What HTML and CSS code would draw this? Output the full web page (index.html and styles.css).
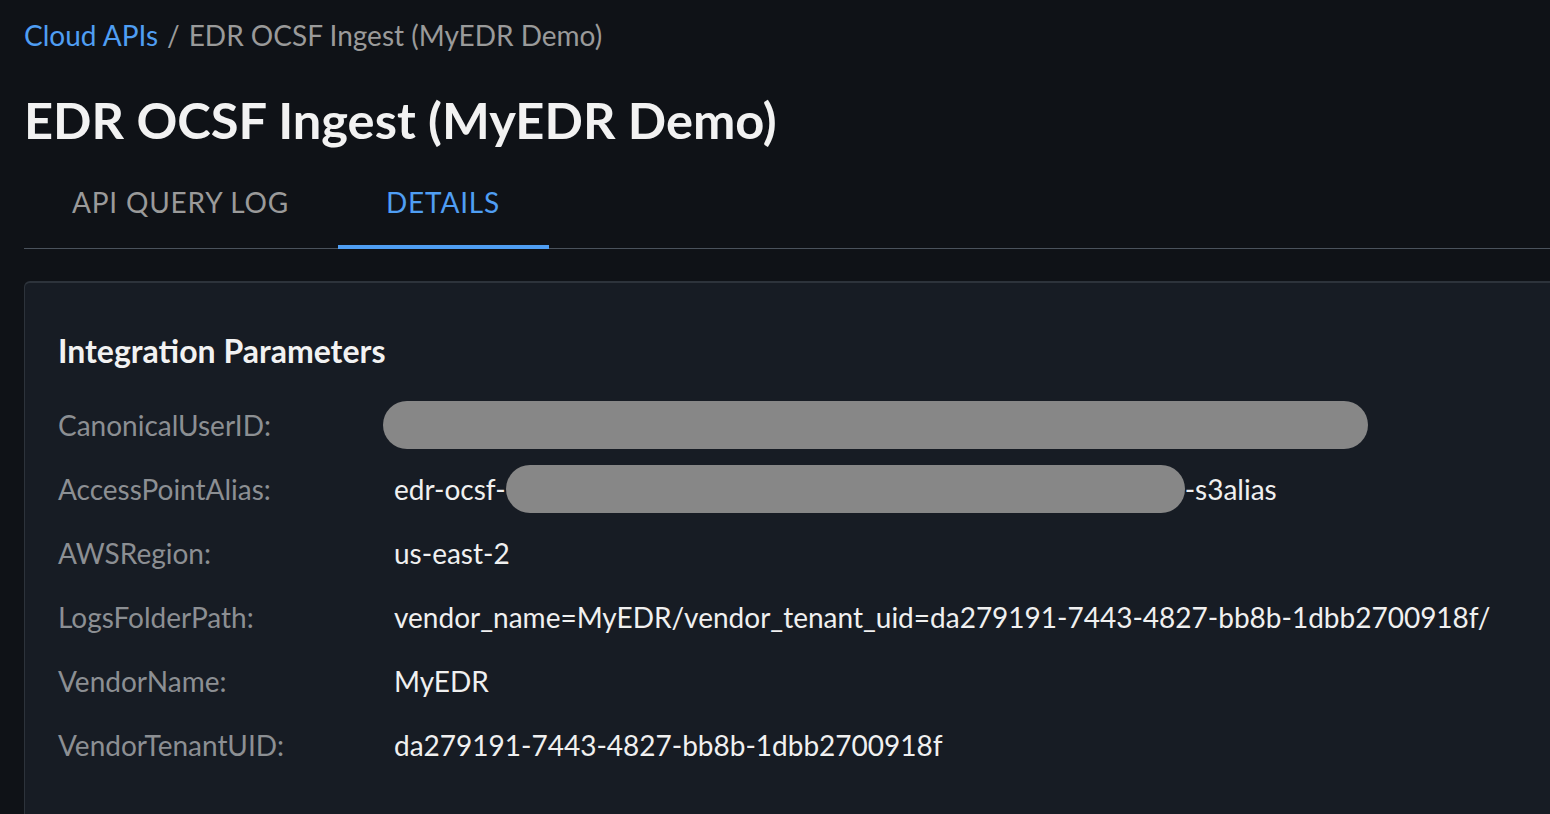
FILE: index.html
```html
<!DOCTYPE html>
<html lang="en">
<head>
<meta charset="utf-8">
<title>EDR OCSF Ingest (MyEDR Demo)</title>
<link rel="stylesheet" href="styles.css">
</head>
<body>
<div class="page">
  <nav class="breadcrumb">
    <a class="crumb-link" href="#">Cloud APIs</a>
    <span class="crumb-sep">/</span>
    <span class="crumb-current">EDR OCSF Ingest (MyEDR Demo)</span>
  </nav>
  <h1 class="title">EDR OCSF Ingest (MyEDR Demo)</h1>
  <div class="tabs">
    <div class="tab">API QUERY LOG</div>
    <div class="tab tab-active">DETAILS</div>
  </div>
  <section class="card">
    <h2 class="card-title">Integration Parameters</h2>
    <dl class="params">
      <div class="row">
        <dt class="label">CanonicalUserID:</dt>
        <dd class="value"><span class="redact redact-full"></span></dd>
      </div>
      <div class="row">
        <dt class="label">AccessPointAlias:</dt>
        <dd class="value">edr-ocsf-<span class="redact redact-mid"></span>-s3alias</dd>
      </div>
      <div class="row">
        <dt class="label">AWSRegion:</dt>
        <dd class="value">us-east-2</dd>
      </div>
      <div class="row">
        <dt class="label">LogsFolderPath:</dt>
        <dd class="value">vendor_name=MyEDR/vendor_tenant_uid=da279191-7443-4827-bb8b-1dbb2700918f/</dd>
      </div>
      <div class="row">
        <dt class="label">VendorName:</dt>
        <dd class="value">MyEDR</dd>
      </div>
      <div class="row">
        <dt class="label">VendorTenantUID:</dt>
        <dd class="value">da279191-7443-4827-bb8b-1dbb2700918f</dd>
      </div>
    </dl>
  </section>
</div>
</body>
</html>
```

FILE: styles.css
```css
html, body {
  margin: 0;
  padding: 0;
  background: #0f1217;
  height: 100%;
  overflow: hidden;
}

body {
  font-family: Lato, "Noto Sans", sans-serif;
  color: #f0f0f0;
}

.page {
  padding: 18px 0 0 24px;
}

.breadcrumb {
  font-size: 28px;
  line-height: 34px;
  display: flex;
  gap: 9px;
  color: #9a9a9a;
}

.crumb-link {
  color: #4f9ef3;
  text-decoration: none;
}

.title {
  margin: 38px 0 0 0;
  font-size: 50.6px;
  line-height: 60px;
  font-weight: 700;
  color: #f2f2f2;
}

.tabs {
  margin-top: 12px;
  display: flex;
  border-bottom: 1px solid #4a525c;
}

.tab {
  font-size: 28px;
  line-height: 34px;
  letter-spacing: 0.8px;
  color: #9a9a9a;
  padding: 23px 49px 26px 48px;
  border-bottom: 4px solid transparent;
  margin-bottom: -1px;
}

.tab-active {
  color: #4f9ef3;
  border-bottom-color: #4f9ef3;
}

.card {
  margin-top: 32px;
  background: #171c24;
  border-top: 2px solid #2d333b;
  border-left: 1px solid #2d333b;
  border-top-left-radius: 6px;
  padding: 50px 0 40px 33px;
  min-height: 600px;
}

.card-title {
  margin: 0 0 24px 0;
  font-size: 32px;
  line-height: 36px;
  font-weight: 700;
  color: #f2f2f2;
}

.params {
  margin: 0;
}

.row {
  display: flex;
  align-items: center;
  height: 64px;
}

.label {
  width: 336px;
  flex: none;
  font-size: 28px;
  color: #8c8f93;
}

.value {
  margin: 0;
  font-size: 28px;
  color: #f0f0f0;
  display: flex;
  align-items: center;
  white-space: nowrap;
}

.redact {
  display: inline-block;
  height: 48px;
  border-radius: 24px;
  background: #878787;
}

.redact-full {
  width: 985px;
  margin-left: -11px;
}

.redact-mid {
  width: 679px;
}
```
